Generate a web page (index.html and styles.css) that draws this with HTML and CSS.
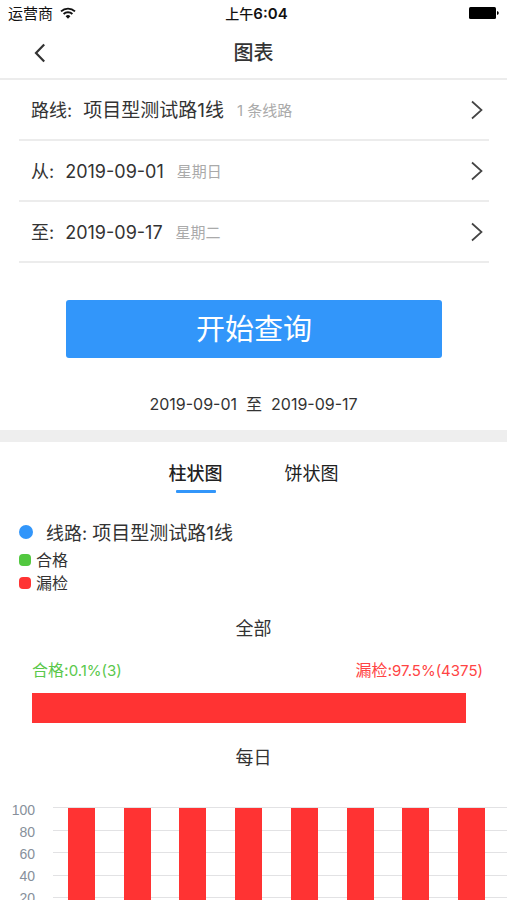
FILE: index.html
```html
<!DOCTYPE html>
<html lang="zh-CN">
<head>
<meta charset="utf-8">
<meta name="viewport" content="width=device-width, initial-scale=1">
<title>图表</title>
<link rel="stylesheet" href="styles.css">
</head>
<body>
<div class="screen">
  <div class="status">
    <div class="carrier">
      <span>运营商</span>
      <svg width="16" height="12" viewBox="0 0 16 12" aria-hidden="true">
        <path d="M1 4.4a10.2 10.2 0 0 1 14 0M3.6 7a6.4 6.4 0 0 1 8.8 0" fill="none" stroke="#111" stroke-width="1.9"/>
        <path d="M5.6 9.2a3.5 3.5 0 0 1 4.8 0L8 11.7z" fill="#111"/>
      </svg>
    </div>
    <div class="clock">上午<b>6:04</b></div>
    <div class="battery">
      <svg width="30" height="12" viewBox="0 0 30 12" aria-hidden="true">
        <rect x="0" y="0" width="27" height="12" rx="1.5" fill="#000"/>
        <path d="M28 4q1.8.4 1.8 2T28 8z" fill="#000"/>
      </svg>
    </div>
  </div>
  <header class="nav">
    <button class="back" type="button" aria-label="返回">
      <svg width="12" height="20" viewBox="0 0 12 20"><path d="M10.2 1.5L2 10l8.200 8.500" fill="none" stroke="#333" stroke-width="2.200"/></svg>
    </button>
    <h1>图表</h1>
  </header>
  <main>
    <div class="filters">
      <button class="row" type="button">
        <span class="label">路线:</span><span class="value route">项目型测试路1线</span><span class="note">1 条线路</span>
        <svg class="chevron" width="12" height="20" viewBox="0 0 12 20" aria-hidden="true"><path d="M1 1.500L10.500 10L1 18.500" fill="none" stroke="#444" stroke-width="1.700"/></svg>
      </button>
      <button class="row" type="button">
        <span class="label">从:</span><span class="value">2019-09-01</span><span class="note">星期日</span>
        <svg class="chevron" width="12" height="20" viewBox="0 0 12 20" aria-hidden="true"><path d="M1 1.500L10.500 10L1 18.500" fill="none" stroke="#444" stroke-width="1.700"/></svg>
      </button>
      <button class="row" type="button">
        <span class="label">至:</span><span class="value">2019-09-17</span><span class="note">星期二</span>
        <svg class="chevron" width="12" height="20" viewBox="0 0 12 20" aria-hidden="true"><path d="M1 1.500L10.500 10L1 18.500" fill="none" stroke="#444" stroke-width="1.700"/></svg>
      </button>
    </div>
    <button class="query" type="button">开始查询</button>
    <p class="range"><span>2019-09-01</span><span>至</span><span>2019-09-17</span></p>
    <div class="band"></div>
    <div class="tabs" role="tablist">
      <button class="tab active" type="button" role="tab" aria-selected="true">柱状图</button>
      <button class="tab" type="button" role="tab" aria-selected="false">饼状图</button>
    </div>
    <div class="legend">
      <div class="line"><span class="dot"></span><span class="name">线路: <span class="route">项目型测试路1线</span></span></div>
      <div class="key"><span class="swatch pass"></span>合格</div>
      <div class="key"><span class="swatch miss"></span>漏检</div>
    </div>
    <h2>全部</h2>
    <div class="totals">
      <div class="pass-text">合格:<span class="figure">0.1%(3)</span></div>
      <div class="miss-text">漏检:<span class="figure">97.5%(4375)</span></div>
    </div>
    <div class="total-bar"></div>
    <h2>每日</h2>
    <div class="chart">
      <div class="axis"><span>100</span><span>80</span><span>60</span><span>40</span><span>20</span></div>
      <div class="plot">
        <div class="lines"><i></i><i></i><i></i><i></i><i></i></div>
        <div class="bars"><i></i><i></i><i></i><i></i><i></i><i></i><i></i><i></i></div>
      </div>
    </div>
  </main>
</div>
</body>
</html>
```
FILE: styles.css
```css
* { box-sizing: border-box; }
body {
  margin: 0;
  background: #fff;
  color: #333;
  font-family: Inter, "Noto Sans CJK SC", sans-serif;
  font-size: 18px;
}
button {
  margin: 0;
  padding: 0;
  border: 0;
  background: none;
  color: inherit;
  font: inherit;
}
svg { display: block; }
h1, h2, p { margin: 0; font-weight: 400; }

.screen { height: 100vh; overflow: hidden; }

.status {
  display: grid;
  grid-template-columns: 1fr auto 1fr;
  align-items: center;
  height: 28px;
  padding: 0 8px;
  color: #111;
  font-size: 15px;
  line-height: 24px;
}
.carrier { display: flex; align-items: center; gap: 7px; }
.carrier svg { margin-bottom: 2px; }
.clock { padding-left: 6px; font-size: 14px; font-weight: 500; }
.clock b { font-size: 15px; font-weight: 600; }
.battery { justify-self: end; padding-bottom: 2px; }

.nav {
  display: grid;
  grid-template-columns: 80px 1fr 80px;
  align-items: center;
  height: 52px;
  border-bottom: 2px solid #ececec;
}
.back { display: flex; justify-content: center; height: 20px; }
.nav h1 { font-size: 20px; font-weight: 500; line-height: 48px; text-align: center; }

.filters { margin: 0 18px 0 19px; }
.row {
  display: flex;
  align-items: center;
  width: 100%;
  height: 61px;
  padding: 2px 6px 0 12px;
  border-bottom: 2px solid #ececec;
  line-height: 24px;
  text-align: left;
}
.label { margin-right: 11px; }
.route { font-size: 19px; }
.note { margin-left: 13px; color: #aaa; font-size: 15px; }
.chevron { margin-left: auto; margin-bottom: 2px; }

.query {
  display: block;
  width: calc(100% - 131px);
  height: 58px;
  margin: 37px 65px 0 66px;
  padding-top: 2px;
  border-radius: 3px;
  background: #3296fa;
  color: #fff;
  font-size: 29px;
  line-height: 56px;
}
.range {
  display: flex;
  justify-content: center;
  gap: 9px;
  margin-top: 34px;
  font-size: 16px;
  line-height: 24px;
}
.band { height: 12px; margin-top: 14px; background: #eee; }

.tabs { display: flex; justify-content: center; gap: 62px; padding-top: 16px; }
.tab {
  display: flex;
  flex-direction: column;
  align-items: center;
  height: 36px;
  color: #222;
  line-height: 32px;
}
.tab.active { font-weight: 500; }
.tab.active::after {
  content: "";
  width: 40px;
  height: 3px;
  border-radius: 1px;
  background: #3296fa;
}

.legend { padding: 24px 19px 0; }
.line { display: flex; align-items: center; height: 28px; margin-bottom: 2px; line-height: 24px; }
.name { padding-top: 4px; }
.dot {
  width: 14px;
  height: 14px;
  margin-right: 13px;
  border-radius: 50%;
  background: #3296fa;
}
.key { display: flex; align-items: center; gap: 5px; height: 23px; font-size: 16px; line-height: 22px; }
.swatch { width: 12px; height: 12px; border-radius: 4px; }
.pass { background: #52c840; }
.miss { background: #f33; }

h2 { margin-top: 20px; font-size: 18px; line-height: 30px; text-align: center; }
.totals {
  display: flex;
  justify-content: space-between;
  margin-top: 14px;
  padding: 0 24px 0 32px;
  font-size: 16px;
  line-height: 24px;
}
.figure { font-size: 15px; }
.pass-text { color: #5ac84b; }
.miss-text { color: #f44; }
.total-bar { height: 30px; margin: 10px 41px 0 32px; background: #f33; }

.chart { display: flex; margin-top: 26px; }
.axis {
  display: grid;
  grid-auto-rows: 22px;
  width: 53px;
  padding-right: 18px;
  color: #87909b;
  font-family: "Liberation Sans", sans-serif;
  font-size: 14px;
  line-height: 22px;
  text-align: right;
}
.plot { display: grid; flex: 1; height: 113px; margin-top: 8px; }
.lines, .bars { grid-area: 1 / 1; }
.lines { display: grid; grid-template-rows: repeat(5, 1fr); }
.lines i { border-top: 1px solid #e2e2e4; }
.bars { display: flex; justify-content: space-between; padding: 1px 22px 0 15px; }
.bars i { width: 27px; background: #f33; }
```
